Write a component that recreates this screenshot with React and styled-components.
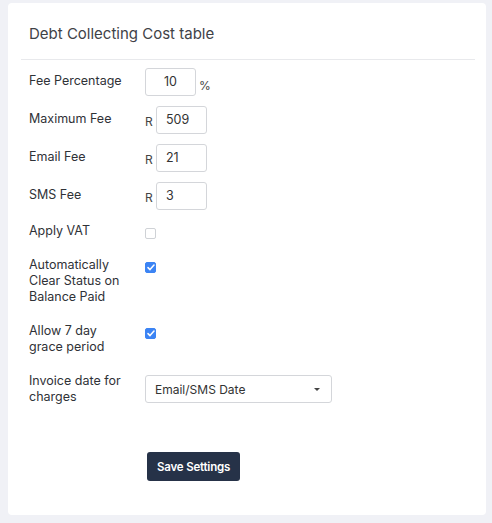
import React from "react";
import styled, { createGlobalStyle } from "styled-components";

const Global = createGlobalStyle`
  html, body { margin: 0; padding: 0; background: #f0f1f6; }
  body { font-family: Inter, "Noto Sans", sans-serif; color: #333; }
  * { box-sizing: border-box; }
`;

const Page = styled.div`
  padding: 3px 6px 8px 8px;
  width: 492px;
  height: 523px;
`;

const Card = styled.div`
  background: #fff;
  border-radius: 4px;
  height: 512px;
  padding: 0 11px 0 13px;
`;

const Title = styled.h2`
  margin: 0;
  padding: 22px 0 16px 8px;
  font-size: 15px;
  font-weight: 400;
  line-height: 18px;
  color: #3f4247;
  border-bottom: 1px solid #e8e9ec;
`;

const Form = styled.div`
  padding: 8px 8px 0 8px;
  display: flex;
  flex-direction: column;
  gap: 10px;
`;

const Row = styled.div`
  display: grid;
  grid-template-columns: 116px 1fr;
  align-items: start;
`;

const Label = styled.div`
  font-size: 12.5px;
  line-height: 16px;
  padding: ${(p) => (p.$input ? "5px 0 3px" : "3px 0 5px")};
  color: #2f3237;
  width: 100px;
`;

const Field = styled.div`
  display: flex;
  align-items: center;
  gap: 3px;
`;

const Prefix = styled.span`
  font-size: 12px;
  color: #444;
  padding-top: 3px;
  width: 8px;
`;

const Suffix = styled.span`
  font-size: 12px;
  color: #444;
  padding-top: 6px;
`;

const TextInput = styled.div`
  width: 51px;
  height: 28px;
  border: 1px solid #d4d6da;
  border-radius: 3px;
  font-size: 12.5px;
  line-height: 26px;
  color: #333;
  text-align: ${(p) => (p.$center ? "center" : "left")};
  padding: 0 9px;
`;

const Check = styled.span`
  display: inline-flex;
  align-items: center;
  justify-content: center;
  width: 11px;
  height: 11px;
  margin-top: 8px;
  border-radius: 2px;
  background: ${(p) => (p.$on ? "#3c84f4" : "#fff")};
  border: 1px solid ${(p) => (p.$on ? "#3c84f4" : "#cfd2d6")};
`;

const Select = styled.div`
  margin-top: 5px;
  width: 187px;
  height: 28px;
  border: 1px solid #d4d6da;
  border-radius: 3px;
  display: flex;
  align-items: center;
  justify-content: space-between;
  padding: 0 11px 0 9px;
  font-size: 12px;
  color: #333;
`;

const Caret = styled.span`
  width: 0;
  height: 0;
  border-left: 3.5px solid transparent;
  border-right: 3.5px solid transparent;
  border-top: 3.5px solid #444;
`;

const Button = styled.button`
  margin: 32px 0 0 118px;
  align-self: flex-start;
  background: #263248;
  color: #fff;
  border: none;
  border-radius: 3px;
  height: 29px;
  padding: 0 10px;
  font-family: Inter, "Noto Sans", sans-serif;
  font-size: 11.5px;
  font-weight: 600;
  letter-spacing: -0.2px;
`;

const Tick = () => (
  <svg width="8" height="7" viewBox="0 0 8 7">
    <path d="M1 3.6 L3 5.6 L7 1" fill="none" stroke="#fff" strokeWidth="1.5" strokeLinecap="round" strokeLinejoin="round" />
  </svg>
);

export default function App() {
  return (
    <>
      <Global />
      <Page>
        <Card>
          <Title>Debt Collecting Cost table</Title>
          <Form>
            <Row>
              <Label $input>Fee Percentage</Label>
              <Field>
                <TextInput $center>10</TextInput>
                <Suffix>%</Suffix>
              </Field>
            </Row>
            <Row>
              <Label $input>Maximum Fee</Label>
              <Field>
                <Prefix>R</Prefix>
                <TextInput>509</TextInput>
              </Field>
            </Row>
            <Row>
              <Label $input>Email Fee</Label>
              <Field>
                <Prefix>R</Prefix>
                <TextInput>21</TextInput>
              </Field>
            </Row>
            <Row>
              <Label $input>SMS Fee</Label>
              <Field>
                <Prefix>R</Prefix>
                <TextInput>3</TextInput>
              </Field>
            </Row>
            <Row>
              <Label>Apply VAT</Label>
              <Field>
                <Check />
              </Field>
            </Row>
            <Row>
              <Label>Automatically Clear Status on Balance Paid</Label>
              <Field>
                <Check $on><Tick /></Check>
              </Field>
            </Row>
            <Row>
              <Label>Allow 7 day grace period</Label>
              <Field>
                <Check $on><Tick /></Check>
              </Field>
            </Row>
            <Row>
              <Label>Invoice date for charges</Label>
              <Field>
                <Select>
                  <span>Email/SMS Date</span>
                  <Caret />
                </Select>
              </Field>
            </Row>
            <Button>Save Settings</Button>
          </Form>
        </Card>
      </Page>
    </>
  );
}
